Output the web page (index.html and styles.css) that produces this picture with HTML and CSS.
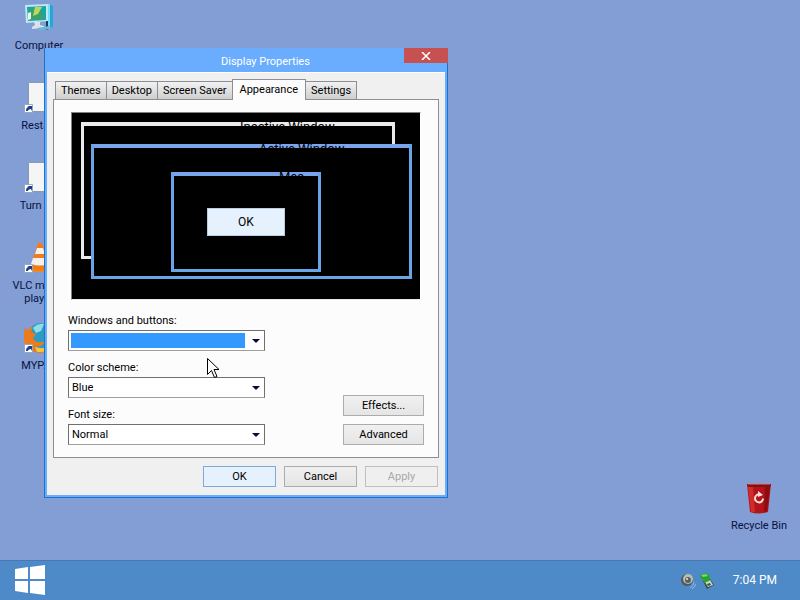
FILE: index.html
```html
<!DOCTYPE html>
<html lang="en">

<head>
    <meta charset="UTF-8">
    <meta name="viewport" content="width=device-width, initial-scale=1.0">
    <title>Display Properties</title>
    <link rel="stylesheet" href="styles.css">
</head>

<body>
    <main id="desktop">
        <div id="shortcuts">
            <a href="#" class="shortcut">
                <svg width="32" height="32" viewBox="0 0 32 32">
                    <path d="M23 2l5 1v23l-5 2z" fill="#123c66"/>
                    <path d="M25 2l5 2v21l-5 2z" fill="#28a5d8"/>
                    <path d="M25 2h2v25h-2z" fill="#79dcf5"/>
                    <path d="M2 3l23-1v17L3 21z" fill="#bfe9ee"/>
                    <path d="M4 5l19-1v14L5 19z" fill="#18a7a3"/>
                    <path d="M5 10q6-6 12-4l4 11-15 1z" fill="#3f9f6b"/>
                    <path d="M12 5l7 0-4 7-5 2z" fill="#b9d860"/>
                    <path d="M5 11l3-1v7l-3 1z" fill="#e8f7f0"/>
                    <path d="M11 20h6v3l4 1v2l-12 1v-2l3-2z" fill="#d9e4ea"/>
                    <path d="M14 26l12-2 3 2-12 3z" fill="#6fb6d4"/>
                </svg>
                <span>Computer</span>
            </a>
            <a href="#" class="shortcut">
                <svg width="32" height="32" viewBox="0 0 32 32">
                    <path d="M5.500 .5h24v29h-24z" fill="#f3f5f7" stroke="#8d99aa"/>
                    <path d="M1.500 22.500h8v8h-8z" fill="#fff" stroke="#9aa7ba"/>
                    <path d="M3 29c0-3 1-4 3-4l-2-1h5v5l-1-2c-2 0-3 1-3 2z" fill="#183f8c"/>
                </svg>
                <span>Restart</span>
            </a>
            <a href="#" class="shortcut">
                <svg width="32" height="32" viewBox="0 0 32 32">
                    <path d="M5.500 .5h24v29h-24z" fill="#f3f5f7" stroke="#8d99aa"/>
                    <path d="M1.500 22.500h8v8h-8z" fill="#fff" stroke="#9aa7ba"/>
                    <path d="M3 29c0-3 1-4 3-4l-2-1h5v5l-1-2c-2 0-3 1-3 2z" fill="#183f8c"/>
                </svg>
                <span>Turn off</span>
            </a>
            <a href="#" class="shortcut">
                <svg width="32" height="32" viewBox="0 0 32 32">
                    <path d="M7 22h20l5 8H2z" fill="#f08a1e"/>
                    <path d="M15 1h4l8 25q-10 5-20 0z" fill="#f47c16"/>
                    <path d="M14 6h6l2 6H12z" fill="#f4f1ec"/>
                    <path d="M10 16h14l2 6q-9 3-18 0z" fill="#f4f1ec"/>
                    <path d="M1.500 22.500h8v8h-8z" fill="#fff" stroke="#9aa7ba"/>
                    <path d="M3 29c0-3 1-4 3-4l-2-1h5v5l-1-2c-2 0-3 1-3 2z" fill="#183f8c"/>
                </svg>
                <span>VLC media player</span>
            </a>
            <a href="#" class="shortcut">
                <svg width="32" height="32" viewBox="0 0 32 32">
                    <circle cx="18" cy="14" r="13" fill="#2b9cc4"/>
                    <path d="M10 6q5-5 11-4l-3 7-5 2z" fill="#8fdcea"/>
                    <path d="M2 6l3 2q2-3 5-3l-2 5 5 2-3 4q2 5 8 4l4 0q-4 6-11 4 8 6 20 0-6 7-14 7Q3 30 1 18 1 10 2 6z" fill="#ee7a1b"/>
                    <path d="M12 25q10 3 17-2-5 8-15 7z" fill="#f7c53a"/>
                    <path d="M1.500 22.500h8v8h-8z" fill="#fff" stroke="#9aa7ba"/>
                    <path d="M3 29c0-3 1-4 3-4l-2-1h5v5l-1-2c-2 0-3 1-3 2z" fill="#183f8c"/>
                </svg>
                <span>MYPAL</span>
            </a>
        </div>

        <a href="#" class="shortcut" id="recycleBin">
            <svg width="32" height="32" viewBox="0 0 32 32">
                <path d="M4 2h24l-3 28q-9 3-18 0z" fill="#b3141a"/>
                <path d="M5 5h5l2 25-4 0z" fill="#d32a2a"/>
                <path d="M22 5h5l-3 24-3 1z" fill="#8e0b12"/>
                <path d="M4 2h24l-1 3H5z" fill="#7d1219"/>
                <path d="M5 2h22" stroke="#e07b78"/>
                <path d="M17 12.500a4 4 0 1 0 3 4" fill="none" stroke="#ffe1d8" stroke-width="2"/>
                <path d="M15 9l5 4-5 2z" fill="#ffe1d8"/>
            </svg>
            <span>Recycle Bin</span>
        </a>

        <section id="displayWindow">
            <header class="title-bar">
                <h1>Display Properties</h1>
                <button type="button" class="close-button" aria-label="Close">
                    <svg width="10" height="8" viewBox="0 0 10 8">
                        <path d="M1 0l8 8M9 0L1 8" stroke="#fff" stroke-width="1.500"/>
                    </svg>
                </button>
            </header>

            <form class="window-body">
                <nav class="tabs">
                    <button type="button">Themes</button>
                    <button type="button">Desktop</button>
                    <button type="button">Screen Saver</button>
                    <button type="button" class="active">Appearance</button>
                    <button type="button">Settings</button>
                </nav>

                <div class="tab-panel">
                    <!-- Preview of the selected colour scheme -->
                    <div class="preview">
                        <div class="mini-window inactive-window">Inactive Window</div>
                        <div class="mini-window active-window">Active Window</div>
                        <div class="mini-window message-window">Mes...</div>
                        <button type="button" class="preview-ok">OK</button>
                    </div>

                    <div class="settings">
                        <div class="fields">
                            <div class="field">
                                <label for="windowStyle">Windows and buttons:</label>
                                <div class="select-box">
                                    <select id="windowStyle" class="highlighted">
                                        <option></option>
                                    </select>
                                </div>
                            </div>
                            <div class="field">
                                <label for="colorScheme">Color scheme:</label>
                                <div class="select-box">
                                    <select id="colorScheme">
                                        <option>Blue</option>
                                    </select>
                                </div>
                            </div>
                            <div class="field">
                                <label for="fontSize">Font size:</label>
                                <div class="select-box">
                                    <select id="fontSize">
                                        <option>Normal</option>
                                    </select>
                                </div>
                            </div>
                        </div>
                        <div class="side-buttons">
                            <button type="button" class="btn">Effects...</button>
                            <button type="button" class="btn">Advanced</button>
                        </div>
                    </div>
                </div>

                <footer class="window-buttons">
                    <button type="button" class="btn default">OK</button>
                    <button type="button" class="btn">Cancel</button>
                    <button type="button" class="btn" disabled>Apply</button>
                </footer>
            </form>
        </section>

        <svg id="pointer" width="13" height="21" viewBox="0 0 13 21">
            <path d="M.5.5v16l4-4 3 7 2.500-1-3-7h5z" fill="#fff" stroke="#000"/>
        </svg>
    </main>

    <footer id="taskbar">
        <button type="button" id="startButton" aria-label="Start">
            <svg width="32" height="32" viewBox="0 0 32 32">
                <path d="M1 4l13-2v12H1zM16 2l15-2v14H16zM1 16h13v12L1 26zM16 16h15v14l-15-2z" fill="#fff"/>
            </svg>
        </button>
        <div id="tray">
            <svg width="16" height="16" viewBox="0 0 16 16">
                <circle cx="7" cy="7" r="6" fill="#515a57"/>
                <circle cx="8" cy="6" r="5" fill="#b9bdb2"/>
                <circle cx="8" cy="7" r="3" fill="#596063"/>
                <circle cx="7" cy="6" r="1" fill="#e9e9df"/>
                <path d="M10 15q4-2 4-6M12 16q3-2 4-5" fill="none" stroke="#91b7ec"/>
            </svg>
            <svg width="16" height="16" viewBox="0 0 16 16">
                <path d="M4 8l7-2 4 6-7 4z" fill="#3b4b45"/>
                <path d="M6 9l5-2 3 5-5 2z" fill="#c9d8c8"/>
                <path d="M8 11l3-1 1 2-3 1z" fill="#3e5349"/>
                <path d="M1 2l6-2 4 3-1 5-5 2V7L2 6z" fill="#26a52b"/>
                <path d="M2 2l5-1 2 2-5 1z" fill="#7cdb63"/>
            </svg>
            <time>7:04 PM</time>
        </div>
    </footer>
</body>

</html>
```
FILE: styles.css
```css
* {
    box-sizing: border-box;
}

body {
    margin: 0;
    min-height: 100vh;
    display: flex;
    flex-direction: column;
    background-color: #839dd5;
    font-family: Roboto, "Liberation Sans", sans-serif;
    font-size: 11px;
    line-height: 13px;
    color: #000;
}

button,
select {
    font: inherit;
    color: inherit;
    margin: 0;
    padding: 0;
    border-radius: 0;
}

/* Desktop */
#desktop {
    position: relative;
    flex: 1;
}

#shortcuts {
    width: 78px;
}

.shortcut {
    display: flex;
    flex-direction: column;
    align-items: center;
    gap: 5px;
    width: 78px;
    height: 80px;
    padding: 2px 10px 0;
    text-align: center;
    text-decoration: none;
    color: #06123f;
}

#recycleBin {
    position: absolute;
    right: 2px;
    bottom: 0;
}

#pointer {
    position: absolute;
    left: 207px;
    top: 358px;
}

/* Window */
#displayWindow {
    position: absolute;
    left: 44px;
    top: 48px;
    width: 404px;
    border: 1px solid #1e72c6;
    border-top: 0;
    background-color: #6aadff;
    padding: 0 2px 2px;
}

.title-bar {
    position: relative;
    height: 24px;
    padding-top: 6px;
}

.title-bar h1 {
    margin: 0;
    padding-left: 174px;
    font-size: 11px;
    font-weight: normal;
    line-height: 16px;
    color: #fff;
}

.close-button {
    position: absolute;
    top: 0;
    right: -3px;
    width: 44px;
    height: 15px;
    border: 0;
    background-color: #c75050;
    display: flex;
    align-items: center;
    justify-content: center;
}

.window-body {
    background-color: #f0f0f0;
    padding: 6px 6px 8px;
    border-top: 1px solid #fff;
}

/* Tabs */
.tabs {
    display: flex;
    align-items: flex-end;
    padding-left: 2px;
    height: 20px;
}

.tabs button {
    height: 18px;
    padding: 0 5px;
    border: 1px solid #8c8e94;
    border-bottom: 0;
    border-left-width: 0;
    background: linear-gradient(#f2f2f2, #cfcfcf);
}

.tabs button:first-child {
    border-left-width: 1px;
}

.tabs button.active {
    position: relative;
    height: 21px;
    margin: 0 0 -1px -1px;
    padding: 0 7px 2px;
    border-left-width: 1px;
    background: #fcfcfc;
}

.tab-panel {
    border: 1px solid #8c8e94;
    background-color: #fcfcfc;
    padding: 12px 14px;
}

/* Preview */
.preview {
    position: relative;
    margin: 0 3px;
    height: 188px;
    background-color: #000;
    border: 1px solid #808080;
    border-right-color: #fff;
    border-bottom-color: #e8e8e8;
}

/* The captions are black, so only the part over the frame shows */
.mini-window {
    position: absolute;
    font-size: 13px;
    line-height: 10px;
    background: linear-gradient(#7aa4ec, #7aa4ec) top / 100% 4px no-repeat #000;
    border: solid #6aa4e8;
    border-width: 0 3px 3px;
}

.inactive-window {
    left: 9px;
    top: 9px;
    width: 314px;
    height: 137px;
    padding-left: 156px;
    background-image: linear-gradient(#ebebeb, #ebebeb);
    border-color: #ebebeb;
}

.active-window {
    left: 19px;
    top: 31px;
    width: 321px;
    height: 135px;
    padding-left: 165px;
}

.message-window {
    left: 99px;
    top: 59px;
    width: 150px;
    height: 100px;
    padding-left: 105px;
}

.preview-ok {
    position: absolute;
    left: 135px;
    top: 95px;
    width: 78px;
    height: 28px;
    border: 1px solid #b9cfe4;
    background-color: #e5f1fc;
    font-size: 12px;
}

/* Settings */
.settings {
    display: flex;
    justify-content: space-between;
    align-items: flex-end;
    padding-top: 14px;
}

.fields {
    display: flex;
    flex-direction: column;
    gap: 10px;
    width: 197px;
}

.field label {
    display: block;
    height: 16px;
}

.select-box {
    position: relative;
}

.select-box select {
    display: block;
    appearance: none;
    width: 100%;
    height: 21px;
    padding-left: 3px;
    border: 1px solid #707070;
    border-bottom-color: #a0a0a0;
    background-color: #fff;
}

.select-box select.highlighted {
    background: linear-gradient(#3399ff, #3399ff) 2px 2px / 174px 15px no-repeat #fff;
}

.select-box::after {
    content: "";
    position: absolute;
    right: 5px;
    top: 9px;
    border: 4px solid transparent;
    border-top-color: #0a0a32;
    border-bottom: 0;
    pointer-events: none;
}

.side-buttons {
    display: flex;
    flex-direction: column;
    gap: 8px;
    width: 81px;
}

.btn {
    height: 21px;
    border: 1px solid #acacac;
    background: linear-gradient(#f0f0f0, #e5e5e5);
}

.btn.default {
    border-color: #7eaad6;
    background: #e5f1fc;
}

.btn:disabled {
    color: #a8a8a8;
    background: #efefef;
    border-color: #bfbfbf;
}

.window-buttons {
    display: flex;
    justify-content: flex-end;
    gap: 8px;
    padding: 8px 1px 0 0;
}

.window-buttons .btn {
    width: 73px;
}

/* Taskbar */
#taskbar {
    display: flex;
    align-items: center;
    justify-content: space-between;
    height: 40px;
    padding: 0 23px 0 14px;
    border-top: 1px solid #4877b5;
    background-color: #4d8ac7;
}

#startButton {
    border: 0;
    background: none;
    height: 32px;
}

#tray {
    display: flex;
    align-items: center;
    gap: 3px;
    color: #fff;
    font-size: 12px;
}

#tray time {
    padding-left: 15px;
}
```
